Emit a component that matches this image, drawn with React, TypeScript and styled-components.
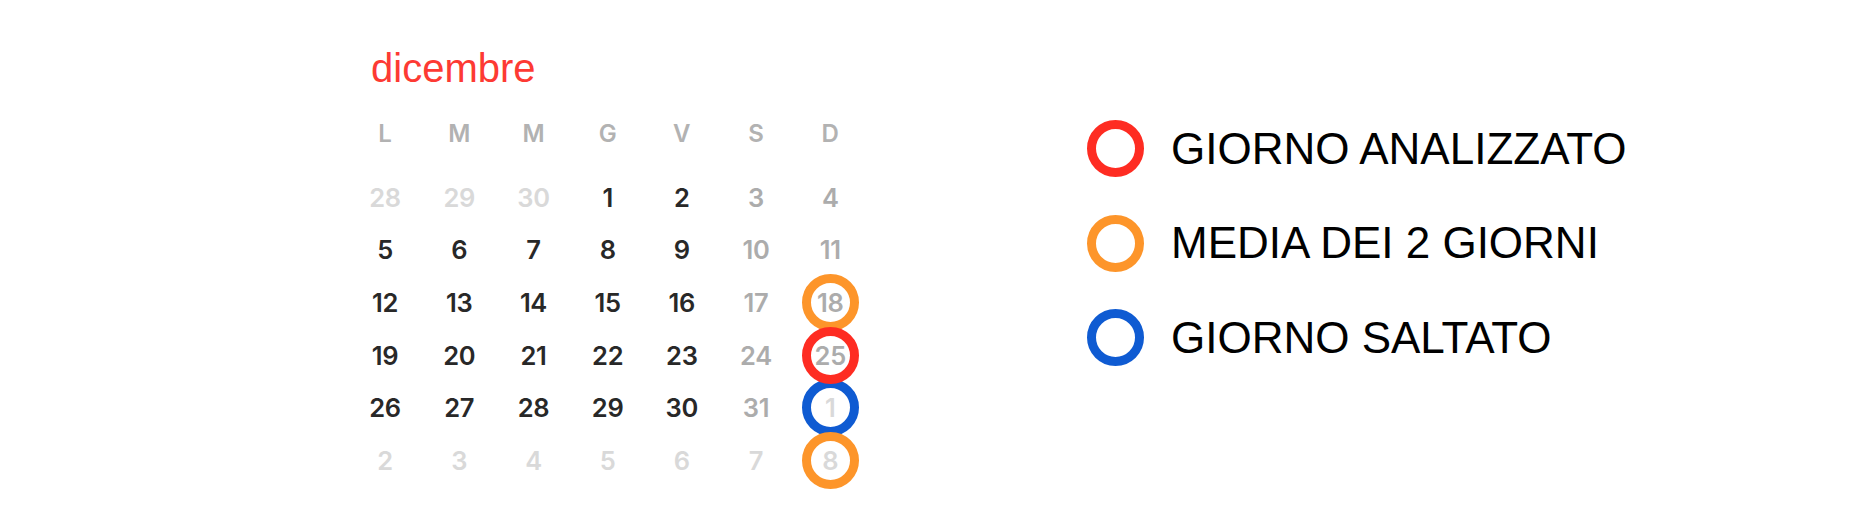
import styled, { createGlobalStyle } from "styled-components";


type Tone = "dark" | "weekend" | "muted";
type Ring = "red" | "orange" | "blue";

interface IDay
{
	label: number;
	tone: Tone;
	ring?: Ring;
}


const ringColors: Record<Ring, string> = {
	red: "#fe2c22",
	orange: "#fd952a",
	blue: "#0f5bd2",
};

const toneColors: Record<Tone, string> = {
	dark: "#282828",
	weekend: "#acacac",
	muted: "#d9d9d9",
};


const GlobalStyle = createGlobalStyle`
	html, body {
		margin: 0;
		padding: 0;
		background: #ffffff;
	}

	body {
		width: 1870px;
		height: 520px;
		overflow: hidden;
	}
`;


const PageSC = styled.div`
	display: flex;
	align-items: flex-start;
	gap: 219px;
	padding: 44px 0 0 348px;
	height: 520px;
	box-sizing: border-box;
`;


const CalendarSC = styled.div`
	width: 520px;
	font-family: Inter, "Noto Sans", sans-serif;
`;


const MonthTitle = styled.h2`
	margin: 0 0 15px 23px;
	font-family: "Liberation Sans", Arial, sans-serif;
	font-weight: 400;
	font-size: 40px;
	line-height: 48px;
	color: #fd3a33;
`;


const WeekHeader = styled.div`
	display: grid;
	grid-template-columns: repeat(7, 74.2px);
	height: 52px;
	margin-bottom: 12px;
`;


const WeekLetter = styled.span`
	display: flex;
	align-items: center;
	justify-content: center;
	font-size: 24px;
	font-weight: 600;
	color: #b2b2b2;
`;


const DaysGrid = styled.div`
	display: grid;
	grid-template-columns: repeat(7, 74.2px);
	grid-auto-rows: 52.6px;
`;


const DayCell = styled.div`
	display: flex;
	align-items: center;
	justify-content: center;
`;


const DayNumber = styled.span<{ $tone: Tone; $ring?: Ring }>`
	display: flex;
	align-items: center;
	justify-content: center;
	flex: none;
	width: 57px;
	height: 57px;
	box-sizing: border-box;
	border-radius: 50%;
	border: ${p => p.$ring ? `9.5px solid ${ringColors[p.$ring]}` : "none"};
	position: relative;
	z-index: ${p => p.$ring === "red" ? 2 : p.$ring ? 1 : 0};
	font-size: 25.5px;
	font-weight: 600;
	letter-spacing: -0.3px;
	color: ${p => toneColors[p.$tone]};
`;


const LegendSC = styled.ul`
	list-style: none;
	margin: 76px 0 0;
	padding: 0;
	display: flex;
	flex-direction: column;
	gap: 37.5px;
`;


const LegendItem = styled.li`
	display: flex;
	align-items: center;
	gap: 27px;
	height: 57px;
`;


const LegendRing = styled.span<{ $ring: Ring }>`
	width: 57px;
	height: 57px;
	box-sizing: border-box;
	border-radius: 50%;
	border: 9.5px solid ${p => ringColors[p.$ring]};
`;


const LegendLabel = styled.span`
	font-family: "Liberation Sans", Arial, sans-serif;
	font-size: 44px;
	color: #000000;
`;


const weekLetters = ["L", "M", "M", "G", "V", "S", "D"];

const rings: Record<string, Ring> = {
	"0-18": "orange",
	"0-25": "red",
	"1-1": "blue",
	"1-8": "orange",
};


function buildDays(): IDay[]
{
	const days: IDay[] = [];

	for (let d = 28; d <= 30; d++)
		days.push({ label: d, tone: "muted" });

	for (let d = 1; d <= 31; d++)
	{
		const col = days.length % 7;
		days.push({ label: d, tone: col >= 5 ? "weekend" : "dark", ring: rings[`0-${d}`] });
	}

	for (let d = 1; days.length < 42; d++)
		days.push({ label: d, tone: "muted", ring: rings[`1-${d}`] });

	return days;
}


const legend: { ring: Ring; label: string }[] = [
	{ ring: "red", label: "GIORNO ANALIZZATO" },
	{ ring: "orange", label: "MEDIA DEI 2 GIORNI" },
	{ ring: "blue", label: "GIORNO SALTATO" },
];


export default function App()
{
	const days = buildDays();

	return (
		<>
			<GlobalStyle />
			<PageSC>
				<CalendarSC>
					<MonthTitle>dicembre</MonthTitle>

					<WeekHeader>
						{weekLetters.map((l, i) => <WeekLetter key={i}>{l}</WeekLetter>)}
					</WeekHeader>

					<DaysGrid>
						{days.map((day, i) => (
							<DayCell key={i}>
								<DayNumber $tone={day.tone} $ring={day.ring}>{day.label}</DayNumber>
							</DayCell>
						))}
					</DaysGrid>
				</CalendarSC>

				<LegendSC>
					{legend.map(item => (
						<LegendItem key={item.label}>
							<LegendRing $ring={item.ring} />
							<LegendLabel>{item.label}</LegendLabel>
						</LegendItem>
					))}
				</LegendSC>
			</PageSC>
		</>
	);
}
